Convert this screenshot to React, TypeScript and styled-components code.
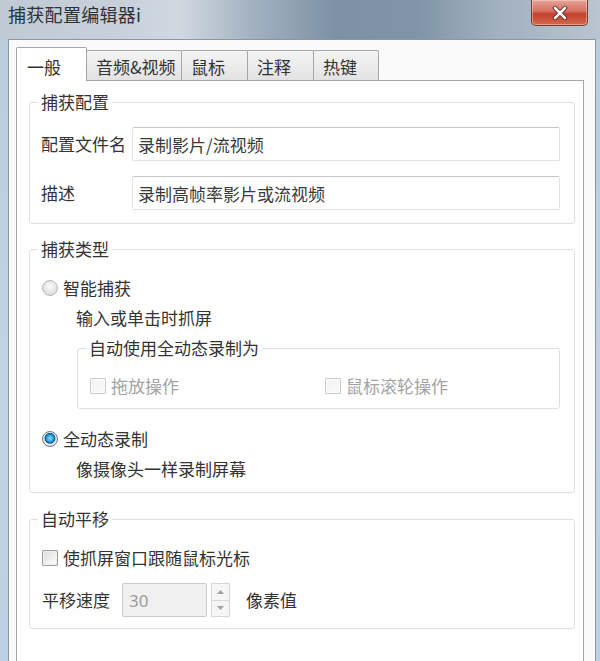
import React from 'react';
import styled, { createGlobalStyle } from 'styled-components';

const GlobalStyle = createGlobalStyle`
  html, body {
    margin: 0;
    padding: 0;
  }
  body {
    width: 600px;
    height: 661px;
    overflow: hidden;
    font-family: "Noto Sans CJK SC", "Noto Sans", sans-serif;
    color: #333;
  }
  * {
    box-sizing: border-box;
  }
`;

const Window = styled.div`
  width: 600px;
  height: 661px;
  display: flex;
  flex-direction: column;
  overflow: hidden;
  background: linear-gradient(180deg, #b9cbdd 0%, #c3d3e3 60%, #bdcfe2 100%);
`;

const TitleBar = styled.div`
  height: 39px;
  flex: none;
  display: flex;
  justify-content: space-between;
  align-items: flex-start;
  padding-left: 8px;
  background: linear-gradient(
    90deg,
    #c0cad4 0%,
    #c8d1da 20%,
    #d0d8e0 30%,
    #a3b2c1 42%,
    #7d90a4 56%,
    #8195a8 70%,
    #a0afbe 82%,
    #b9c5d0 100%
  );
`;

const Title = styled.div`
  font-size: 18px;
  line-height: 28px;
  color: #2e3338;
  letter-spacing: 0.3px;
`;

const CloseButton = styled.div`
  width: 57px;
  height: 26px;
  margin-right: 12px;
  display: flex;
  align-items: center;
  justify-content: center;
  border: 1px solid #7d3a32;
  border-top: none;
  border-radius: 0 0 5px 5px;
  background: linear-gradient(180deg, #e5a598 0%, #d6705f 45%, #c4412c 55%, #d26a4f 100%);
  box-shadow: inset 0 0 0 1px rgba(255, 220, 210, 0.45);
`;

const ClientArea = styled.div`
  flex: 1;
  margin: 0 4px 0 8px;
  border: 1px solid #8a98a6;
  border-bottom: none;
  background: #fafafa;
  padding: 7px 11px 0 7px;
  display: flex;
  flex-direction: column;
`;

const TabStrip = styled.div`
  display: flex;
  align-items: flex-end;
  flex: none;
`;

const Tab = styled.div<{ $active?: boolean; $width: number }>`
  width: ${(p) => p.$width}px;
  height: ${(p) => (p.$active ? 34 : 30)}px;
  margin-bottom: ${(p) => (p.$active ? -1 : 0)}px;
  margin-left: -1px;
  padding: ${(p) => (p.$active ? '9px 0 0 10px' : '6px 0 0 9px')};
  border: 1px solid #a3a6ac;
  border-bottom: none;
  border-radius: 2px 2px 0 0;
  font-size: 17px;
  line-height: 20px;
  color: #333;
  white-space: nowrap;
  position: relative;
  z-index: ${(p) => (p.$active ? 1 : 0)};
  background: ${(p) =>
    p.$active ? '#ffffff' : 'linear-gradient(180deg, #f4f4f4 0%, #ececec 50%, #e2e2e2 100%)'};

  &:first-child {
    margin-left: 0;
  }
`;

const Panel = styled.div`
  flex: 1;
  background: #ffffff;
  border: 1px solid #a3a6ac;
  border-bottom: none;
  padding: 11px 8px 0 12px;
  display: flex;
  flex-direction: column;
  gap: 15px;
`;

const Group = styled.fieldset<{ $inset?: number; $top?: number }>`
  margin: ${(p) => p.$top ?? 0}px 0 0 ${(p) => p.$inset ?? 0}px;
  padding: 0;
  min-width: 0;
  border: 1px solid #dfdfdf;
  border-radius: 3px;
`;

const Legend = styled.legend`
  margin-left: 8px;
  padding: 0 3px;
  font-size: 17px;
  line-height: 20px;
  color: #333;
`;

const GroupBody = styled.div<{ $pad: string }>`
  padding: ${(p) => p.$pad};
  display: flex;
  flex-direction: column;
`;

const FieldRow = styled.div<{ $gap?: number }>`
  display: flex;
  align-items: center;
  margin-top: ${(p) => p.$gap ?? 0}px;
`;

const FieldLabel = styled.div<{ $width: number }>`
  width: ${(p) => p.$width}px;
  flex: none;
  font-size: 17px;
  line-height: 20px;
  color: #333;
`;

const TextInput = styled.div`
  flex: 1;
  height: 34px;
  padding: 0 5px;
  display: flex;
  align-items: center;
  border: 1px solid #e0e3e7;
  border-top-color: #c3c6cb;
  border-radius: 2px;
  background: #fff;
  font-size: 17px;
  color: #3a3a3a;
`;

const OptionRow = styled.div<{ $gap?: number }>`
  display: flex;
  align-items: center;
  height: 20px;
  margin-top: ${(p) => p.$gap ?? 0}px;
  font-size: 17px;
  line-height: 20px;
`;

const OptionText = styled.span<{ $disabled?: boolean }>`
  color: ${(p) => (p.$disabled ? '#a3a3a3' : '#333')};
  white-space: nowrap;
`;

const Radio = styled.span<{ $checked?: boolean }>`
  width: 16px;
  height: 16px;
  margin-right: 5px;
  flex: none;
  border-radius: 50%;
  border: 1px solid ${(p) => (p.$checked ? '#6f7a85' : '#b4b8bc')};
  background: ${(p) =>
    p.$checked
      ? 'radial-gradient(circle at 50% 45%, #8fe0ff 0%, #2b9fd6 32%, #0f5f8f 48%, #e9ecef 56%, #cfd4d9 100%)'
      : 'radial-gradient(circle at 50% 40%, #fbfbfb 0%, #e8e8e8 45%, #d4d4d4 100%)'};
`;

const Checkbox = styled.span<{ $disabled?: boolean }>`
  width: 16px;
  height: 16px;
  margin-right: 5px;
  flex: none;
  border: 1px solid ${(p) => (p.$disabled ? '#c9cbcd' : '#9a9ea3')};
  border-radius: 1px;
  background: ${(p) =>
    p.$disabled
      ? 'linear-gradient(135deg, #f2f2f2 0%, #fafafa 100%)'
      : 'linear-gradient(135deg, #dcdcdc 0%, #f2f2f2 60%, #fbfbfb 100%)'};
  box-shadow: inset 0 0 0 1px ${(p) => (p.$disabled ? '#fbfbfb' : '#f0f0f0')};
`;

const SubText = styled.div<{ $gap: number }>`
  margin: ${(p) => p.$gap}px 0 0 34px;
  font-size: 17px;
  line-height: 20px;
  color: #333;
`;

const OptionGrid = styled.div`
  display: grid;
  grid-template-columns: 235px 1fr;
`;

const SpinInput = styled.div`
  width: 85px;
  height: 34px;
  padding-left: 6px;
  display: flex;
  align-items: center;
  border: 1px solid #c9cbce;
  border-radius: 2px;
  background: #f0f0f0;
  font-family: "Noto Sans", "Liberation Sans", sans-serif;
  font-size: 17px;
  color: #9c9c9c;
`;

const SpinButtons = styled.div`
  width: 19px;
  height: 34px;
  margin-left: 4px;
  display: flex;
  flex-direction: column;
`;

const SpinButton = styled.div`
  flex: 1;
  display: flex;
  align-items: center;
  justify-content: center;
  border: 1px solid #d6d8da;
  background: #f5f5f5;

  & + & {
    border-top: none;
  }
`;

const UnitText = styled.div`
  margin-left: 16px;
  font-size: 17px;
  line-height: 20px;
  color: #333;
`;

const Arrow: React.FC<{ up?: boolean }> = ({ up }) => (
  <svg width="7" height="4" viewBox="0 0 7 4">
    <path d={up ? 'M0 4 L3.5 0 L7 4 Z' : 'M0 0 L3.5 4 L7 0 Z'} fill="#a0a0a0" />
  </svg>
);

const CloseIcon = () => (
  <svg width="16" height="14" viewBox="0 0 16 14">
    <path d="M3 2 L13 12 M13 2 L3 12" stroke="#5a2019" strokeWidth="4.4" strokeLinecap="round" />
    <path d="M3 2 L13 12 M13 2 L3 12" stroke="#ffffff" strokeWidth="2.6" strokeLinecap="round" />
  </svg>
);

const tabs = [
  { label: '一般', width: 71, active: true },
  { label: '音频&视频', width: 96 },
  { label: '鼠标', width: 67 },
  { label: '注释', width: 67 },
  { label: '热键', width: 66 },
];

const App: React.FC = () => {
  return (
    <>
      <GlobalStyle />
      <Window>
        <TitleBar>
          <Title>捕获配置编辑器i</Title>
          <CloseButton>
            <CloseIcon />
          </CloseButton>
        </TitleBar>
        <ClientArea>
          <TabStrip>
            {tabs.map((t) => (
              <Tab key={t.label} $active={t.active} $width={t.width}>
                {t.label}
              </Tab>
            ))}
          </TabStrip>
          <Panel>
            <Group>
              <Legend>捕获配置</Legend>
              <GroupBody $pad="15px 14px 13px 11px">
                <FieldRow>
                  <FieldLabel $width={91}>配置文件名</FieldLabel>
                  <TextInput>录制影片/流视频</TextInput>
                </FieldRow>
                <FieldRow $gap={15}>
                  <FieldLabel $width={91}>描述</FieldLabel>
                  <TextInput>录制高帧率影片或流视频</TextInput>
                </FieldRow>
              </GroupBody>
            </Group>

            <Group>
              <Legend>捕获类型</Legend>
              <GroupBody $pad="19px 14px 13px 12px">
                <OptionRow>
                  <Radio />
                  <OptionText>智能捕获</OptionText>
                </OptionRow>
                <SubText $gap={10}>输入或单击时抓屏</SubText>
                <Group $inset={35} $top={10}>
                  <Legend>自动使用全动态录制为</Legend>
                  <GroupBody $pad="18px 12px 12px 12px">
                    <OptionGrid>
                      <OptionRow>
                        <Checkbox $disabled />
                        <OptionText $disabled>拖放操作</OptionText>
                      </OptionRow>
                      <OptionRow>
                        <Checkbox $disabled />
                        <OptionText $disabled>鼠标滚轮操作</OptionText>
                      </OptionRow>
                    </OptionGrid>
                  </GroupBody>
                </Group>
                <OptionRow $gap={20}>
                  <Radio $checked />
                  <OptionText>全动态录制</OptionText>
                </OptionRow>
                <SubText $gap={10}>像摄像头一样录制屏幕</SubText>
              </GroupBody>
            </Group>

            <Group $top={1}>
              <Legend>自动平移</Legend>
              <GroupBody $pad="19px 14px 11px 12px">
                <OptionRow>
                  <Checkbox />
                  <OptionText>使抓屏窗口跟随鼠标光标</OptionText>
                </OptionRow>
                <FieldRow $gap={15}>
                  <FieldLabel $width={80}>平移速度</FieldLabel>
                  <SpinInput>30</SpinInput>
                  <SpinButtons>
                    <SpinButton>
                      <Arrow up />
                    </SpinButton>
                    <SpinButton>
                      <Arrow />
                    </SpinButton>
                  </SpinButtons>
                  <UnitText>像素值</UnitText>
                </FieldRow>
              </GroupBody>
            </Group>
          </Panel>
        </ClientArea>
      </Window>
    </>
  );
};

export default App;
